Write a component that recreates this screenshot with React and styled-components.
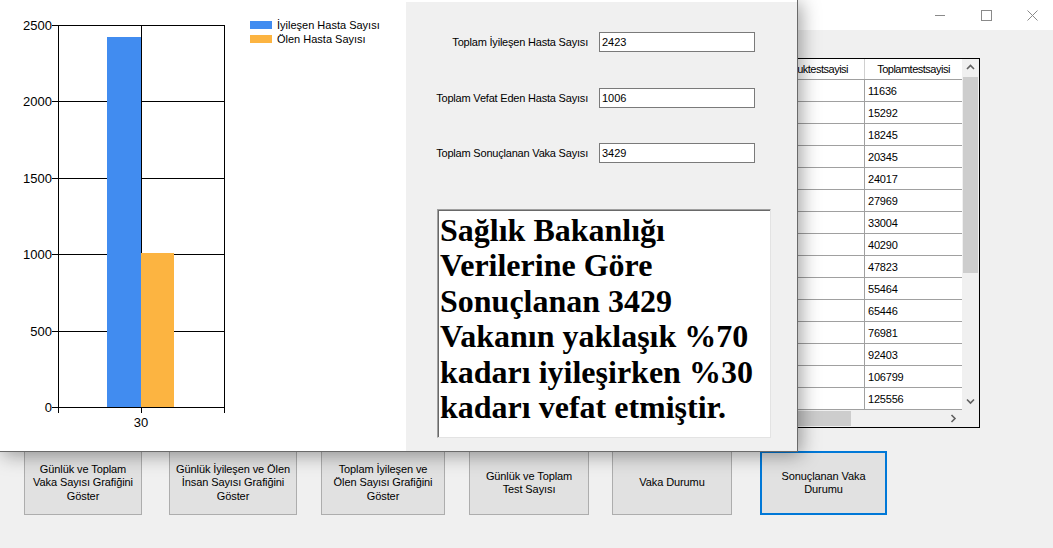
import React from "react";
import styled, { createGlobalStyle } from "styled-components";

const GlobalStyle = createGlobalStyle`
  html, body {
    margin: 0;
    padding: 0;
  }
  body {
    width: 1053px;
    height: 548px;
    overflow: hidden;
    background: #f0f0f0;
    font-family: "Liberation Sans", Arial, sans-serif;
  }
`;

const Desktop = styled.div`
  position: relative;
  width: 1053px;
  height: 548px;
  overflow: hidden;
`;

// back form (the main window)
const MainWindow = styled.div`
  display: flex;
  flex-direction: column;
  width: 100%;
  height: 100%;
  background: #f0f0f0;
`;

const TitleBar = styled.div`
  height: 30px;
  background: #ffffff;
  display: flex;
  justify-content: flex-end;
`;

const TitleControls = styled.div`
  display: flex;
  margin-right: -2px;
`;

const TitleButton = styled.div`
  width: 46px;
  height: 30px;
  display: flex;
  align-items: center;
  justify-content: center;
`;

const Content = styled.div`
  display: flex;
  flex-direction: column;
  padding-top: 28px;
`;

const Grid = styled.div`
  margin-left: 759px;
  width: 221px;
  height: 370px;
  box-sizing: border-box;
  border: 1px solid #000;
  background: #f0f0f0;
  display: flex;
  flex-direction: column;
  font-size: 11px;
  letter-spacing: -0.2px;
  color: #000;
`;

const GridBody = styled.div`
  display: flex;
  height: 351px;
`;

const Table = styled.div`
  width: 202px;
  background: #fff;
  display: flex;
  flex-direction: column;
`;

const HeaderRow = styled.div`
  display: grid;
  grid-template-columns: 104px 98px;
  height: 21px;
  box-sizing: border-box;
  border-bottom: 1px solid #a0a0a0;
`;

const HeaderCell = styled.div`
  display: flex;
  align-items: center;
  justify-content: center;
  white-space: nowrap;
  overflow: hidden;
  letter-spacing: -0.5px;
  border-left: ${(p) => (p.$first ? "none" : "1px solid #d0d0d0")};
`;

const Row = styled.div`
  display: grid;
  grid-template-columns: 104px 98px;
  height: 22px;
  box-sizing: border-box;
  border-bottom: 1px solid #a0a0a0;
`;

const Cell = styled.div`
  display: flex;
  align-items: center;
  padding-left: 3px;
  border-left: ${(p) => (p.$first ? "none" : "1px solid #a0a0a0")};
`;

const VScroll = styled.div`
  width: 17px;
  display: flex;
  flex-direction: column;
  background: #f0f0f0;
`;

const ArrowBox = styled.div`
  width: 17px;
  height: 17px;
  display: flex;
  align-items: center;
  justify-content: center;
  flex-shrink: 0;
`;

const VThumb = styled.div`
  margin: 1px 1px 0 1px;
  height: 196px;
  background: #cdcdcd;
`;

const Spacer = styled.div`
  flex: 1;
`;

const HScrollRow = styled.div`
  display: flex;
  height: 17px;
`;

const HTrack = styled.div`
  width: 202px;
  display: flex;
  align-items: center;
  background: #f0f0f0;
`;

const HThumb = styled.div`
  width: 91px;
  height: 15px;
  background: #cdcdcd;
`;

const Corner = styled.div`
  width: 17px;
  background: #f0f0f0;
`;

const ButtonRow = styled.div`
  display: flex;
  margin-top: 23px;
`;

const FormButton = styled.div`
  width: ${(p) => p.$w}px;
  margin-left: ${(p) => p.$ml}px;
  height: 64px;
  box-sizing: border-box;
  background: #e1e1e1;
  border: ${(p) => (p.$focused ? "2px solid #0078d7" : "1px solid #adadad")};
  display: flex;
  align-items: center;
  justify-content: center;
  text-align: center;
  font-size: 11px;
  line-height: 13.5px;
  letter-spacing: -0.1px;
  color: #000;
`;

// front form (chart window)
const ChartWindow = styled.div`
  position: absolute;
  top: 0;
  left: 0;
  width: 798px;
  height: 452px;
  box-sizing: border-box;
  border-right: 1px solid #6a6a6a;
  border-bottom: 1px solid #6a6a6a;
  background: #fff;
  display: flex;
  box-shadow: 3px 3px 18px rgba(0, 0, 0, 0.38);
`;

const ChartPanel = styled.div`
  width: 406px;
  background: #fff;
  display: flex;
`;

const Legend = styled.div`
  margin-left: 10px;
  padding-top: 18px;
  display: flex;
  flex-direction: column;
`;

const LegendItem = styled.div`
  height: 14px;
  display: flex;
  align-items: center;
  font-size: 11px;
  color: #000;
  white-space: nowrap;
`;

const Swatch = styled.span`
  width: 22px;
  height: 8px;
  margin-right: 5px;
  background: ${(p) => p.$color};
`;

const SidePanel = styled.div`
  flex: 1;
  margin-top: 2px;
  background: #f0f0f0;
  padding-top: 30px;
  display: flex;
  flex-direction: column;
  gap: 35.5px;
`;

const FieldRow = styled.div`
  display: flex;
  align-items: center;
  height: 20px;
`;

const FieldLabel = styled.div`
  width: 182px;
  text-align: right;
  font-size: 11px;
  letter-spacing: -0.2px;
  color: #000;
  white-space: nowrap;
`;

const TextBox = styled.div`
  margin-left: 11px;
  width: 156px;
  height: 20px;
  box-sizing: border-box;
  border: 1px solid #7a7a7a;
  background: #fff;
  padding-left: 2px;
  display: flex;
  align-items: center;
  font-size: 11px;
  color: #000;
`;

const RichBox = styled.div`
  margin-top: 10px;
  margin-left: 31px;
  width: 334px;
  height: 229px;
  box-sizing: border-box;
  background: #fff;
  border-top: 1px solid #a0a0a0;
  border-left: 1px solid #a0a0a0;
  border-right: 1px solid #e3e3e3;
  border-bottom: 1px solid #e3e3e3;
  box-shadow: inset 1px 1px 0 #696969;
  padding: 3px 0 0 2px;
  font-family: "Liberation Serif", "Times New Roman", serif;
  font-weight: bold;
  font-size: 32px;
  line-height: 35.6px;
  color: #000;
  white-space: nowrap;
`;

const Chevron = ({ dir }) => {
  const pts = {
    up: "1,5 4.5,1.5 8,5",
    down: "1,1.5 4.5,5 8,1.5",
    right: "1.5,1 5,4.5 1.5,8",
  }[dir];
  const w = dir === "right" ? 7 : 9;
  const h = dir === "right" ? 9 : 7;
  return (
    <svg width={w} height={h} viewBox={`0 0 ${w} ${h}`}>
      <polyline points={pts} fill="none" stroke="#606060" strokeWidth="1.6" />
    </svg>
  );
};

const ticks = [
  { v: 2500, y: 25.5 },
  { v: 2000, y: 101.5 },
  { v: 1500, y: 178.5 },
  { v: 1000, y: 254.5 },
  { v: 500, y: 331.5 },
  { v: 0, y: 407.5 },
];

const BarChart = () => (
  <svg width="240" height="450" viewBox="0 0 240 450">
    {ticks.map((t) => (
      <line key={t.v} x1="52" x2="224" y1={t.y} y2={t.y} stroke="#000" strokeWidth="1" />
    ))}
    <line x1="58.5" x2="58.5" y1="25" y2="413" stroke="#000" strokeWidth="1" />
    <line x1="141.5" x2="141.5" y1="25" y2="413" stroke="#000" strokeWidth="1" />
    <line x1="224.5" x2="224.5" y1="25" y2="413" stroke="#000" strokeWidth="1" />
    <rect x="107" y="37" width="34" height="370" fill="#418cf0" />
    <rect x="141" y="253" width="33" height="154" fill="#fcb441" />
    {ticks.map((t) => (
      <text
        key={"l" + t.v}
        x="52"
        y={t.y + 4.5}
        textAnchor="end"
        fontFamily="Liberation Sans, Arial, sans-serif"
        fontSize="13"
        fill="#000"
      >
        {t.v}
      </text>
    ))}
    <text x="141" y="427" textAnchor="middle" fontFamily="Liberation Sans, Arial, sans-serif" fontSize="13" fill="#000">
      30
    </text>
  </svg>
);

const testTotals = [
  11636, 15292, 18245, 20345, 24017, 27969, 33004, 40290, 47823, 55464, 65446,
  76981, 92403, 106799, 125556,
];

const buttons = [
  { w: 118, ml: 24, text: ["Günlük ve Toplam", "Vaka Sayısı Grafiğini", "Göster"] },
  { w: 128, ml: 27, text: ["Günlük İyileşen ve Ölen", "İnsan Sayısı Grafiğini", "Göster"] },
  { w: 124, ml: 24, text: ["Toplam İyileşen ve", "Ölen Sayısı Grafiğini", "Göster"] },
  { w: 120, ml: 24, text: ["Günlük ve Toplam", "Test Sayısı"] },
  { w: 120, ml: 23, text: ["Vaka Durumu"] },
  { w: 127, ml: 28, text: ["Sonuçlanan Vaka", "Durumu"], focused: true },
];

const App = () => {
  return (
    <Desktop>
      <GlobalStyle />
      <MainWindow>
        <TitleBar>
          <TitleControls>
            <TitleButton>
              <svg width="10" height="10" viewBox="0 0 10 10">
                <line x1="0" x2="10" y1="5.5" y2="5.5" stroke="#8a8a8a" strokeWidth="1" />
              </svg>
            </TitleButton>
            <TitleButton>
              <svg width="11" height="11" viewBox="0 0 11 11">
                <rect x="0.5" y="0.5" width="10" height="10" fill="none" stroke="#8a8a8a" strokeWidth="1" />
              </svg>
            </TitleButton>
            <TitleButton>
              <svg width="11" height="11" viewBox="0 0 11 11">
                <path d="M0.5 0.5 L10.5 10.5 M10.5 0.5 L0.5 10.5" stroke="#8a8a8a" strokeWidth="1" />
              </svg>
            </TitleButton>
          </TitleControls>
        </TitleBar>
        <Content>
          <Grid>
            <GridBody>
              <Table>
                <HeaderRow>
                  <HeaderCell $first>Gunluktestsayisi</HeaderCell>
                  <HeaderCell>Toplamtestsayisi</HeaderCell>
                </HeaderRow>
                {testTotals.map((n) => (
                  <Row key={n}>
                    <Cell $first />
                    <Cell>{n}</Cell>
                  </Row>
                ))}
              </Table>
              <VScroll>
                <ArrowBox>
                  <Chevron dir="up" />
                </ArrowBox>
                <VThumb />
                <Spacer />
                <ArrowBox>
                  <Chevron dir="down" />
                </ArrowBox>
              </VScroll>
            </GridBody>
            <HScrollRow>
              <HTrack>
                <HThumb />
                <Spacer />
                <ArrowBox>
                  <Chevron dir="right" />
                </ArrowBox>
              </HTrack>
              <Corner />
            </HScrollRow>
          </Grid>
          <ButtonRow>
            {buttons.map((b, i) => (
              <FormButton key={i} $w={b.w} $ml={b.ml} $focused={b.focused}>
                <div>
                  {b.text.map((line, j) => (
                    <div key={j}>{line}</div>
                  ))}
                </div>
              </FormButton>
            ))}
          </ButtonRow>
        </Content>
      </MainWindow>

      <ChartWindow>
        <ChartPanel>
          <BarChart />
          <Legend>
            <LegendItem>
              <Swatch $color="#418cf0" />
              İyileşen Hasta Sayısı
            </LegendItem>
            <LegendItem>
              <Swatch $color="#fcb441" />
              Ölen Hasta Sayısı
            </LegendItem>
          </Legend>
        </ChartPanel>
        <SidePanel>
          <FieldRow>
            <FieldLabel>Toplam İyileşen Hasta Sayısı</FieldLabel>
            <TextBox>2423</TextBox>
          </FieldRow>
          <FieldRow>
            <FieldLabel>Toplam Vefat Eden Hasta Sayısı</FieldLabel>
            <TextBox>1006</TextBox>
          </FieldRow>
          <FieldRow>
            <FieldLabel>Toplam Sonuçlanan Vaka Sayısı</FieldLabel>
            <TextBox>3429</TextBox>
          </FieldRow>
          <RichBox>
            Sağlık Bakanlığı
            <br />
            Verilerine Göre
            <br />
            Sonuçlanan 3429
            <br />
            Vakanın yaklaşık %70
            <br />
            kadarı iyileşirken %30
            <br />
            kadarı vefat etmiştir.
          </RichBox>
        </SidePanel>
      </ChartWindow>
    </Desktop>
  );
};

export default App;
